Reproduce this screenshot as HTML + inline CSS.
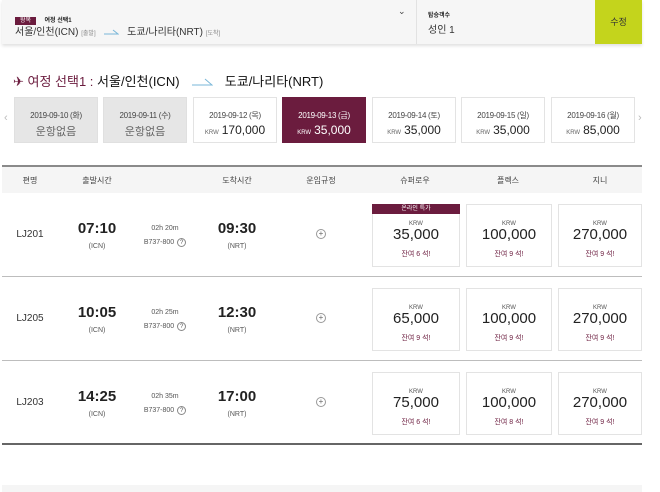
<!DOCTYPE html>
<html><head><meta charset="utf-8"><style>
*{margin:0;padding:0;box-sizing:border-box}
body{width:660px;height:492px;background:#fff;font-family:"Liberation Sans","Noto Sans CJK KR",sans-serif;color:#222;position:relative;overflow:hidden}
.abs{position:absolute}
.top{left:2px;top:0;width:640px;height:44px;background:#f6f6f6;box-shadow:0 2px 3px rgba(0,0,0,.12)}
.tag{background:#6b1c3e;color:#fff;font-size:6px;padding:1px 5px}
.card{top:97px;width:84px;height:46px;border:1px solid #e3e3e3;background:#fff;text-align:center}
.card .d{font-size:8px;color:#444;margin-top:12px;letter-spacing:-.3px}
.card .p{font-size:12px;color:#222;margin-top:2px}
.card .p small{font-size:6px;color:#666;margin-right:3px}
.card.g{background:#e6e6e6;border-color:#e0e0e0}
.card.g .p{color:#666;font-size:11px}
.card.s{background:#6b1c3e;border-color:#6b1c3e}
.card.s .d,.card.s .p,.card.s small{color:#fff!important}
.hdr{left:2px;top:165px;width:640px;height:28px;background:#f5f5f5;border-top:2px solid #8a8a8a}
.hdr span{position:absolute;top:8px;font-size:8px;color:#444;transform:translateX(-50%)}
.row{left:2px;width:640px;height:84px;border-bottom:1px solid #bdbdbd}
.c{position:absolute;transform:translateX(-50%);text-align:center}
.fl{font-size:10px;color:#333;top:36px}
.tm{font-size:15px;font-weight:bold;top:28px;line-height:16px}
.tm small{display:block;font-size:7px;font-weight:normal;color:#555;margin-top:2px}
.du{font-size:7px;color:#555;top:29px;line-height:14px;width:70px}
.q{display:inline-block;width:9px;height:9px;border:1px solid #888;border-radius:50%;font-size:6px;line-height:8px;margin-left:3px}
.pl{top:36px;width:10px;height:10px;border:1px solid #999;border-radius:50%;font-size:8px;line-height:8px;color:#666}
.fb{top:11px;height:63px;border:1px solid #e3e3e3;background:#fff;text-align:center}
.fb .k{font-size:6px;color:#555;margin-top:16px}
.fb .v{font-size:15px;color:#222;line-height:16px}
.fb .r{font-size:7px;color:#6b1c3e;margin-top:6px}
.fb .b{position:absolute;left:-1px;right:-1px;top:-1px;height:10px;background:#6b1c3e;color:#fff;font-size:6px;line-height:10px}
</style></head><body>
<div class="abs top">
 <div class="abs" style="left:13px;top:9px"><span class="tag">왕복</span> <span style="font-size:6px;font-weight:bold;margin-left:4px">여정 선택1</span></div>
 <div class="abs" style="left:13px;top:23px;font-size:10px;color:#333;white-space:nowrap">서울/인천(ICN) <span style="font-size:6px;color:#888">[출발]</span> <svg width="16" height="6" style="margin:0 5px"><path d="M1 5H15L10 1" fill="none" stroke="#7ab7d8" stroke-width="1"/></svg> 도쿄/나리타(NRT) <span style="font-size:6px;color:#888">[도착]</span></div>
 <div class="abs" style="left:396px;top:6px;font-size:9px;color:#444">⌄</div>
 <div class="abs" style="left:414px;top:0;width:1px;height:44px;background:#e2e2e2"></div>
 <div class="abs" style="left:426px;top:10px;font-size:6px;font-weight:bold">탑승객수</div>
 <div class="abs" style="left:426px;top:21px;font-size:10px;color:#333">성인 1</div>
 <div class="abs" style="left:593px;top:0;width:47px;height:44px;background:#c4d41c;color:#333;font-size:9px;text-align:center;line-height:44px">수정</div>
</div>
<div class="abs" style="left:13px;top:71px;font-size:13px;white-space:nowrap;color:#111"><span style="color:#6b1c3e">✈ 여정 선택1 :</span> 서울/인천(ICN) <svg width="22" height="8" style="margin:0 8px"><path d="M1 7H21L14 1" fill="none" stroke="#7ab7d8" stroke-width="1"/></svg> 도쿄/나리타(NRT)</div>
<div class="abs" style="left:4px;top:112px;color:#bbb;font-size:11px">‹</div>
<div class="abs" style="left:638px;top:112px;color:#bbb;font-size:11px">›</div>
<div class="abs card g" style="left:14px"><div class="d">2019-09-10 (화)</div><div class="p">운항없음</div></div>
<div class="abs card g" style="left:103px"><div class="d">2019-09-11 (수)</div><div class="p">운항없음</div></div>
<div class="abs card" style="left:193px"><div class="d">2019-09-12 (목)</div><div class="p"><small>KRW</small>170,000</div></div>
<div class="abs card s" style="left:282px"><div class="d">2019-09-13 (금)</div><div class="p"><small>KRW</small>35,000</div></div>
<div class="abs card" style="left:372px"><div class="d">2019-09-14 (토)</div><div class="p"><small>KRW</small>35,000</div></div>
<div class="abs card" style="left:461px"><div class="d">2019-09-15 (일)</div><div class="p"><small>KRW</small>35,000</div></div>
<div class="abs card" style="left:551px"><div class="d">2019-09-16 (월)</div><div class="p"><small>KRW</small>85,000</div></div>
<div class="abs hdr"><span style="left:28px">편명</span><span style="left:95px">출발시간</span><span style="left:235px">도착시간</span><span style="left:319px">운임규정</span><span style="left:413px">슈퍼로우</span><span style="left:506px">플렉스</span><span style="left:598px">지니</span></div>

<div class="abs row" style="top:193px">
 <div class="c fl" style="left:28px">LJ201</div>
 <div class="c tm" style="left:95px">07:10<small>(ICN)</small></div>
 <div class="c du" style="left:163px">02h 20m<br>B737-800<span class="q">?</span></div>
 <div class="c tm" style="left:235px">09:30<small>(NRT)</small></div>
 <div class="c pl" style="left:319px">+</div>
 <div class="abs fb" style="left:370px;width:88px"><div class="b">온라인 특가</div><div class="k">KRW</div><div class="v">35,000</div><div class="r">잔여 6 석!</div></div>
 <div class="abs fb" style="left:464px;width:86px"><div class="k">KRW</div><div class="v">100,000</div><div class="r">잔여 9 석!</div></div>
 <div class="abs fb" style="left:556px;width:84px"><div class="k">KRW</div><div class="v">270,000</div><div class="r">잔여 9 석!</div></div>
</div>
<div class="abs row" style="top:277px">
 <div class="c fl" style="left:28px">LJ205</div>
 <div class="c tm" style="left:95px">10:05<small>(ICN)</small></div>
 <div class="c du" style="left:163px">02h 25m<br>B737-800<span class="q">?</span></div>
 <div class="c tm" style="left:235px">12:30<small>(NRT)</small></div>
 <div class="c pl" style="left:319px">+</div>
 <div class="abs fb" style="left:370px;width:88px"><div class="k">KRW</div><div class="v">65,000</div><div class="r">잔여 9 석!</div></div>
 <div class="abs fb" style="left:464px;width:86px"><div class="k">KRW</div><div class="v">100,000</div><div class="r">잔여 9 석!</div></div>
 <div class="abs fb" style="left:556px;width:84px"><div class="k">KRW</div><div class="v">270,000</div><div class="r">잔여 9 석!</div></div>
</div>
<div class="abs row" style="top:361px;border-bottom:2px solid #666">
 <div class="c fl" style="left:28px">LJ203</div>
 <div class="c tm" style="left:95px">14:25<small>(ICN)</small></div>
 <div class="c du" style="left:163px">02h 35m<br>B737-800<span class="q">?</span></div>
 <div class="c tm" style="left:235px">17:00<small>(NRT)</small></div>
 <div class="c pl" style="left:319px">+</div>
 <div class="abs fb" style="left:370px;width:88px"><div class="k">KRW</div><div class="v">75,000</div><div class="r">잔여 6 석!</div></div>
 <div class="abs fb" style="left:464px;width:86px"><div class="k">KRW</div><div class="v">100,000</div><div class="r">잔여 8 석!</div></div>
 <div class="abs fb" style="left:556px;width:84px"><div class="k">KRW</div><div class="v">270,000</div><div class="r">잔여 9 석!</div></div>
</div>
<div class="abs" style="left:2px;top:485px;width:640px;height:7px;background:#f5f5f5"></div>
</body></html>
